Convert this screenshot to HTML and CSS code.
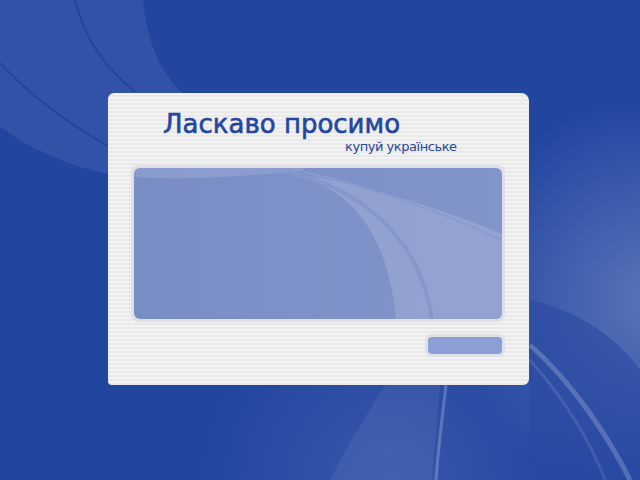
FILE: index.html
```html
<!DOCTYPE html>
<html lang="uk">
<head>
<meta charset="utf-8">
<title>Ласкаво просимо</title>
<link rel="stylesheet" href="styles.css">
</head>
<body>
<div class="screen">
  <svg class="backdrop" width="640" height="480" viewBox="0 0 640 480" aria-hidden="true">
    <defs>
      <radialGradient id="glowR" cx="650" cy="300" r="200" gradientUnits="userSpaceOnUse">
        <stop offset="0" stop-color="#ffffff" stop-opacity="0.25"/>
        <stop offset="1" stop-color="#ffffff" stop-opacity="0"/>
      </radialGradient>
      <radialGradient id="glowB" cx="390" cy="480" r="190" gradientUnits="userSpaceOnUse">
        <stop offset="0" stop-color="#ffffff" stop-opacity="0.1"/>
        <stop offset="1" stop-color="#ffffff" stop-opacity="0"/>
      </radialGradient>
    </defs>
    <rect width="640" height="480" fill="#2245a0"/>
    <rect width="640" height="480" fill="url(#glowR)"/>
    <rect width="640" height="480" fill="url(#glowB)"/>
    <path d="M0,0 L143,0 C148,45 160,75 190,100 L190,190 L108,174 C65,165 28,148 0,126 Z" fill="#ffffff" fill-opacity="0.07"/>
    <path d="M75,0 C82,30 98,62 135,92" fill="none" stroke="#2245a0" stroke-width="2"/>
    <path d="M0,63 C30,95 70,125 115,150" fill="none" stroke="#2245a0" stroke-width="2"/>
    <path d="M530,300 C575,310 615,335 640,370 L640,480 L530,480 Z" fill="#2a4aa2" fill-opacity="0.6"/>
    <path d="M530,345 C575,385 610,440 630,480" fill="none" stroke="#ffffff" stroke-opacity="0.2" stroke-width="5"/>
    <path d="M530,360 C565,400 590,440 605,480" fill="none" stroke="#ffffff" stroke-opacity="0.1" stroke-width="3"/>
    <path d="M446,385 C442,420 438,450 436,480" fill="none" stroke="#ffffff" stroke-opacity="0.22" stroke-width="3"/>
    <path d="M330,480 C350,440 370,410 385,385 L440,385 C437,420 434,450 432,480 Z" fill="#ffffff" fill-opacity="0.06"/>
  </svg>

  <div class="card">
    <div class="head">
      <h1 class="title">Ласкаво просимо</h1>
      <p class="subtitle">купуй українське</p>
    </div>
    <div class="panel">
      <div class="panel-fill">
        <svg class="panel-art" width="368" height="151" viewBox="0 0 368 151" aria-hidden="true">
          <defs>
            <linearGradient id="pg" x1="0" y1="0" x2="1" y2="0">
              <stop offset="0" stop-color="#798dc5"/>
              <stop offset="1" stop-color="#8295ca"/>
            </linearGradient>
          </defs>
          <rect width="368" height="151" fill="url(#pg)"/>
          <path d="M0,0 L0,9 C50,13 110,8 170,3 L170,0 Z" fill="#ffffff" fill-opacity="0.12"/>
          <path d="M130,1 C200,8 252,45 262,151 L368,151 L368,66 C300,38 220,12 130,1 Z" fill="#95a3d0" fill-opacity="0.9"/>
          <path d="M150,3 C228,20 286,70 298,151" fill="none" stroke="#8597cb" stroke-width="4"/>
          <path d="M170,4 C250,22 320,50 368,72" fill="none" stroke="#8a9bcd" stroke-width="2"/>
        </svg>
      </div>
    </div>
    <div class="actions">
      <div class="button"><span class="button-fill"></span></div>
    </div>
  </div>
</div>
</body>
</html>
```
FILE: styles.css
```css
html, body {
  margin: 0;
  padding: 0;
}
body {
  width: 640px;
  height: 480px;
  overflow: hidden;
  font-family: "DejaVu Sans", Verdana, sans-serif;
}
.screen {
  position: relative;
  width: 640px;
  height: 480px;
  padding: 93px 0 0 108px;
  box-sizing: border-box;
}
.backdrop {
  position: absolute;
  left: 0;
  top: 0;
  z-index: 0;
}
.card {
  position: relative;
  z-index: 1;
  width: 421px;
  height: 292px;
  box-sizing: border-box;
  border-radius: 6px 8px 6px 4px;
  background: repeating-linear-gradient(to bottom, #f2f2f2 0, #f2f2f2 2px, #e9e9ea 2px, #e9e9ea 4px);
  display: flex;
  flex-direction: column;
}
.head {
  height: 72px;
}
.title {
  margin: 0;
  padding: 16px 0 0 55px;
  font-size: 26px;
  font-weight: normal;
  line-height: 30px;
  color: #2445a2;
  letter-spacing: 0;
  -webkit-text-stroke: 0.6px #2445a2;
}
.subtitle {
  margin: 0;
  padding: 0 0 0 237px;
  font-size: 13px;
  line-height: 16px;
  color: #2445a2;
  letter-spacing: -0.45px;
}
.panel {
  margin-left: 23px;
  width: 374px;
  height: 157px;
  box-sizing: border-box;
  padding: 3px;
  border-radius: 8px;
  background: #dfe0e7;
}
.panel-fill {
  width: 368px;
  height: 151px;
  border-radius: 6px;
  overflow: hidden;
}
.panel-art {
  display: block;
}
.actions {
  display: flex;
  justify-content: flex-end;
  padding: 12px 24px 0 0;
}
.button {
  width: 80px;
  height: 23px;
  box-sizing: border-box;
  padding: 3px;
  border-radius: 7px;
  background: #dfe0e8;
}
.button-fill {
  display: block;
  height: 100%;
  border-radius: 4px;
  background: #8c9ed3;
}
```
